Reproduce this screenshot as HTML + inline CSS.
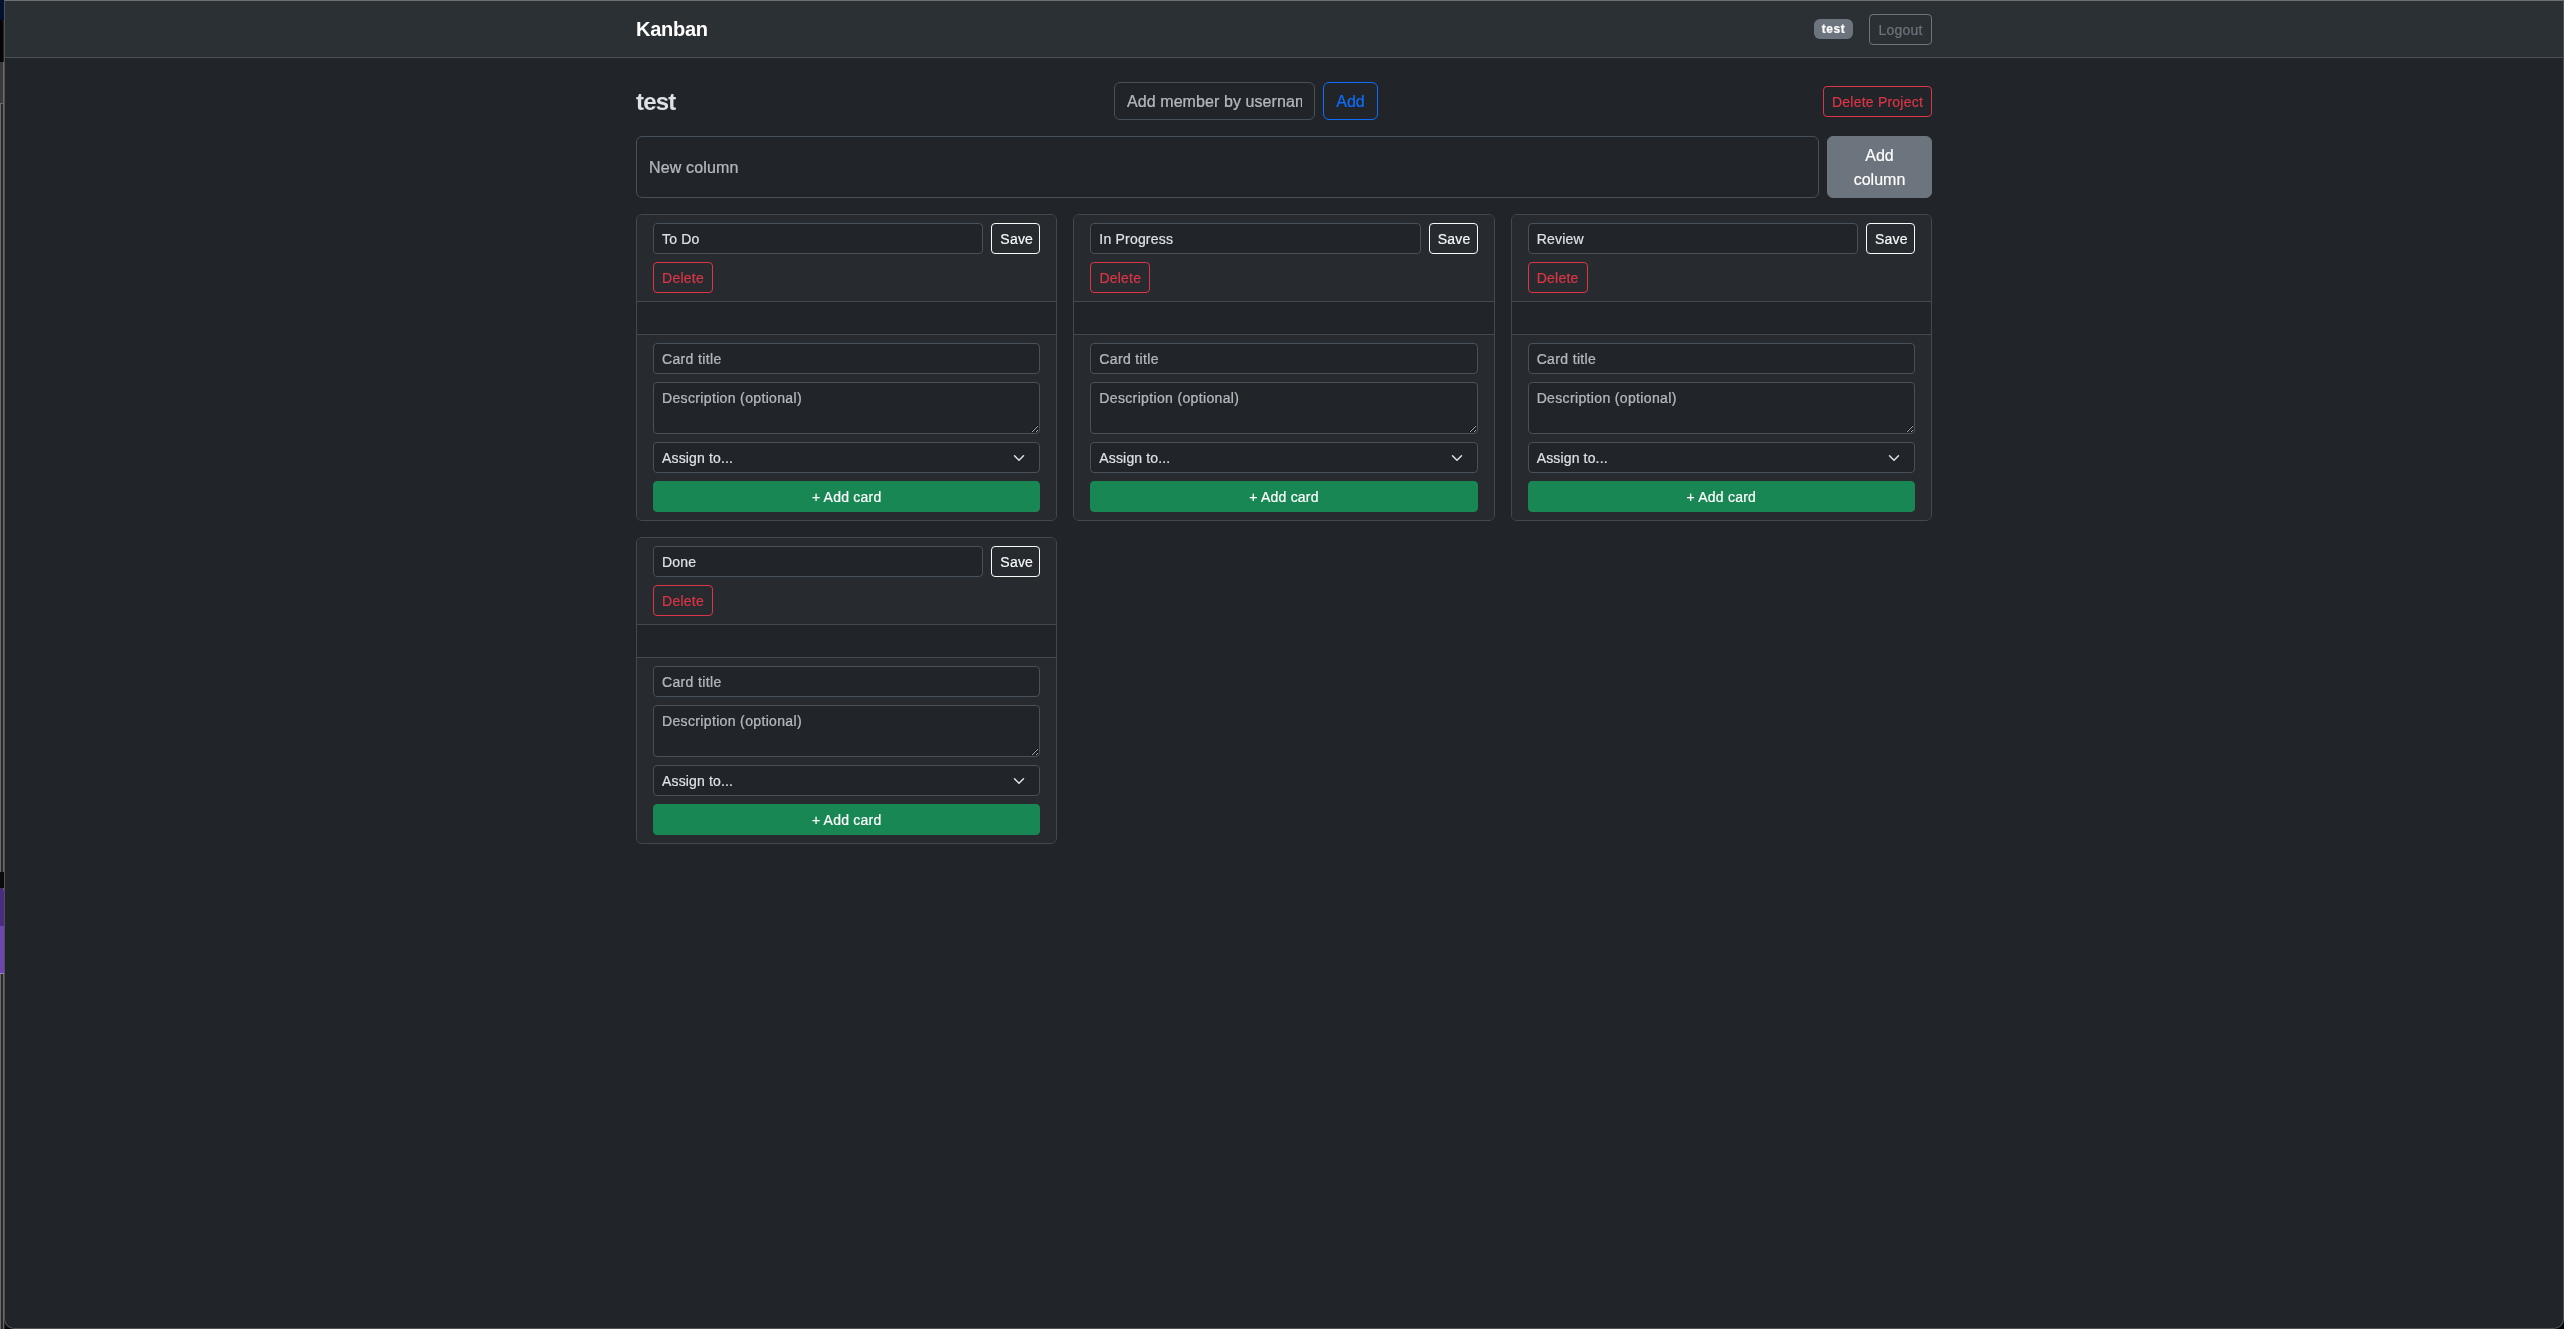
<!DOCTYPE html>
<html><head><meta charset="utf-8"><title>Kanban</title>
<style>
*{box-sizing:border-box;}
html,body{margin:0;padding:0;}
body{width:2564px;height:1329px;overflow:hidden;background:#212529;position:relative;font-family:"Liberation Sans",sans-serif;color:#dee2e6;font-size:16px;line-height:1.5;}
.frame{position:absolute;left:4px;top:0;width:2560px;height:1329px;border:1px solid #4e5256;border-top-color:#717171;border-radius:0 0 10px 10px;z-index:5;pointer-events:none;}
.strip{position:absolute;left:0;top:0;width:5px;height:1329px;background:#272727;z-index:4;}
.strip div{position:absolute;}
.vp{will-change:transform;position:absolute;left:4px;top:1px;width:2560px;height:1328px;background:#212529;border-radius:0 0 10px 10px;overflow:hidden;}
body{background:#02070b;}
.navbar{height:57px;background:#2b3035;border-bottom:1px solid #495057;}
.container{width:1320px;margin:0 auto;padding:0 12px;position:relative;}
.navbar .container{height:56px;display:flex;align-items:center;justify-content:space-between;}
.brand{font-size:20px;font-weight:700;color:#fff;line-height:30px;letter-spacing:-.25px;}
.nav-right{display:flex;align-items:center;}
.badge{display:inline-block;background:#6c757d;color:#fff;font-size:12px;font-weight:700;line-height:1;letter-spacing:.5px;padding:4px 7.8px;border-radius:6px;height:20px;}
.btn{display:inline-block;font-family:"Liberation Sans",sans-serif;border:1px solid transparent;border-radius:6px;background:transparent;text-align:center;white-space:nowrap;}
.btn-sm{font-size:14px;line-height:21px;padding:5px 8px 3px;border-radius:4px;height:31px;letter-spacing:.22px;}
.btn-md{font-size:16px;line-height:24px;padding:7px 12px 5px;height:38px;}
.o-secondary{border-color:#6c757d;color:#6c757d;}
.o-danger{border-color:#dc3545;color:#dc3545;}
.o-primary{border-color:#0d6efd;color:#0d6efd;}
.o-light{border-color:#f8f9fa;color:#f8f9fa;}
.b-secondary{background:#6c757d;border-color:#6c757d;color:#fff;}
.b-success{background:#198754;border-color:#198754;color:#fff;}
.form-control{display:block;width:100%;font-family:"Liberation Sans",sans-serif;font-size:16px;line-height:24px;padding:7px 12px 5px;color:#dee2e6;background:#212529;border:1px solid #495057;border-radius:6px;margin:0;outline:none;letter-spacing:.16px;}
.form-control::placeholder{color:rgba(222,226,230,.75);opacity:1;}
.fc-sm{font-size:14px;line-height:21px;padding:4px 8px;height:31px;border-radius:4px;letter-spacing:.2px;}
.card-footer .fc-sm{letter-spacing:.35px;}
textarea.fc-sm{height:52px;resize:vertical;padding-top:5px;padding-bottom:3px;}
.hdr{margin-top:24px;height:38px;display:flex;align-items:center;justify-content:space-between;}
.hdr h4{margin:0;font-size:24px;font-weight:700;line-height:1.2;letter-spacing:-.85px;position:relative;top:1.5px;}

.newcol{margin-top:16px;display:flex;gap:8px;height:62px;}
.newcol .form-control{height:62px;flex:1;}
.newcol .btn{width:105px;height:62px;font-size:16px;line-height:24px;padding:7px 12px 5px;white-space:normal;border-radius:6px;}
.row{display:flex;flex-wrap:wrap;margin-left:-8px;margin-right:-8px;margin-top:0px;}
.col{width:437.333px;padding:0 8px;margin-top:16px;}
.card{border:1px solid #45494d;border-radius:6px;background:#212529;overflow:hidden;}
.card-header{background:#272b2f;padding:8px 16px;border-bottom:1px solid #45494d;}
.card-body{height:32px;}
.card-footer{background:#272b2f;padding:8px 16px;border-top:1px solid #45494d;}
.trow{display:flex;gap:8px;margin-bottom:8px;}
.trow .form-control{flex:1;}
.mb2{margin-bottom:8px;}
.form-select{display:block;width:100%;height:31px;font-family:"Liberation Sans",sans-serif;font-size:14px;line-height:21px;padding:5px 36px 3px 8px;color:#dee2e6;background:#212529;border:1px solid #495057;border-radius:4px;position:relative;letter-spacing:.15px;}
.form-select svg{position:absolute;right:12px;top:50%;margin-top:-6px;}
.w100{width:100%;display:block;}

.vp input,.vp textarea,.vp button,.vp .form-select,.vp .badge{-webkit-text-stroke:.2px currentColor;}
.form-control::placeholder{-webkit-text-stroke:.2px rgba(222,226,230,.75);}
</style></head>
<body>
<div class="strip">
<div style="left:0;top:0;width:1px;height:1329px;background:#6b6b6b"></div>
<div style="left:3px;top:0;width:1px;height:1329px;background:#6b6b6b"></div>
<div style="left:0;top:0;width:4px;height:22px;background:#04112e"></div>
<div style="left:0;top:20px;width:3px;height:42px;background:#050505;border-radius:0 4px 0 0"></div>
<div style="left:3px;top:20px;width:1px;height:42px;background:#222"></div>
<div style="left:0;top:62px;width:3px;height:41px;background:#3a3a3a"></div>
<div style="left:0;top:103px;width:3px;height:1px;background:#6a6a6a"></div>
<div style="left:0;top:872px;width:4px;height:16px;background:#0a0a0a"></div>
<div style="left:0;top:888px;width:4px;height:38px;background:#4a2d80;border-radius:0 4px 0 0"></div>
<div style="left:0;top:926px;width:4px;height:47px;background:#6e44ae"></div>
<div style="left:0;top:973px;width:4px;height:1px;background:#9a80c8"></div>
</div>
<div class="vp">
  <div class="navbar"><div class="container">
    <div class="brand">Kanban</div>
    <div class="nav-right"><span class="badge" style="width:39px;text-align:center">test</span><button class="btn btn-sm o-secondary" style="margin-left:16px;width:63px">Logout</button></div>
  </div></div>
  <div class="container">
    <div class="hdr">
      <h4 style="width:33px;white-space:nowrap">test</h4>
      <div style="display:flex"><input class="form-control" style="width:201px;letter-spacing:.08px" placeholder="Add member by username"><button class="btn btn-md o-primary" style="margin-left:8px;width:55px">Add</button></div>
      <button class="btn btn-sm o-danger" style="width:109px">Delete Project</button>
    </div>

    <div class="newcol"><input class="form-control" placeholder="New column"><button class="btn b-secondary">Add<br>column</button></div>
    <div class="row"><div class="col"><div class="card">
<div class="card-header"><div class="trow"><input class="form-control fc-sm" value="To Do"><button class="btn btn-sm o-light" style="width:49px">Save</button></div><button class="btn btn-sm o-danger" style="width:60px">Delete</button></div>
<div class="card-body"></div>
<div class="card-footer"><input class="form-control fc-sm mb2" placeholder="Card title"><textarea class="form-control fc-sm mb2" rows="2" placeholder="Description (optional)"></textarea><div class="form-select mb2">Assign to...<svg width="16" height="12" viewBox="0 0 16 16"><path fill="none" stroke="#dee2e6" stroke-linecap="round" stroke-linejoin="round" stroke-width="2" d="m2 5 6 6 6-6"/></svg></div><button class="btn btn-sm b-success w100">+ Add card</button></div>
</div></div><div class="col"><div class="card">
<div class="card-header"><div class="trow"><input class="form-control fc-sm" value="In Progress"><button class="btn btn-sm o-light" style="width:49px">Save</button></div><button class="btn btn-sm o-danger" style="width:60px">Delete</button></div>
<div class="card-body"></div>
<div class="card-footer"><input class="form-control fc-sm mb2" placeholder="Card title"><textarea class="form-control fc-sm mb2" rows="2" placeholder="Description (optional)"></textarea><div class="form-select mb2">Assign to...<svg width="16" height="12" viewBox="0 0 16 16"><path fill="none" stroke="#dee2e6" stroke-linecap="round" stroke-linejoin="round" stroke-width="2" d="m2 5 6 6 6-6"/></svg></div><button class="btn btn-sm b-success w100">+ Add card</button></div>
</div></div><div class="col"><div class="card">
<div class="card-header"><div class="trow"><input class="form-control fc-sm" value="Review"><button class="btn btn-sm o-light" style="width:49px">Save</button></div><button class="btn btn-sm o-danger" style="width:60px">Delete</button></div>
<div class="card-body"></div>
<div class="card-footer"><input class="form-control fc-sm mb2" placeholder="Card title"><textarea class="form-control fc-sm mb2" rows="2" placeholder="Description (optional)"></textarea><div class="form-select mb2">Assign to...<svg width="16" height="12" viewBox="0 0 16 16"><path fill="none" stroke="#dee2e6" stroke-linecap="round" stroke-linejoin="round" stroke-width="2" d="m2 5 6 6 6-6"/></svg></div><button class="btn btn-sm b-success w100">+ Add card</button></div>
</div></div><div class="col"><div class="card">
<div class="card-header"><div class="trow"><input class="form-control fc-sm" value="Done"><button class="btn btn-sm o-light" style="width:49px">Save</button></div><button class="btn btn-sm o-danger" style="width:60px">Delete</button></div>
<div class="card-body"></div>
<div class="card-footer"><input class="form-control fc-sm mb2" placeholder="Card title"><textarea class="form-control fc-sm mb2" rows="2" placeholder="Description (optional)"></textarea><div class="form-select mb2">Assign to...<svg width="16" height="12" viewBox="0 0 16 16"><path fill="none" stroke="#dee2e6" stroke-linecap="round" stroke-linejoin="round" stroke-width="2" d="m2 5 6 6 6-6"/></svg></div><button class="btn btn-sm b-success w100">+ Add card</button></div>
</div></div></div>
  </div>
</div>
<div class="frame"></div>
</body></html>
